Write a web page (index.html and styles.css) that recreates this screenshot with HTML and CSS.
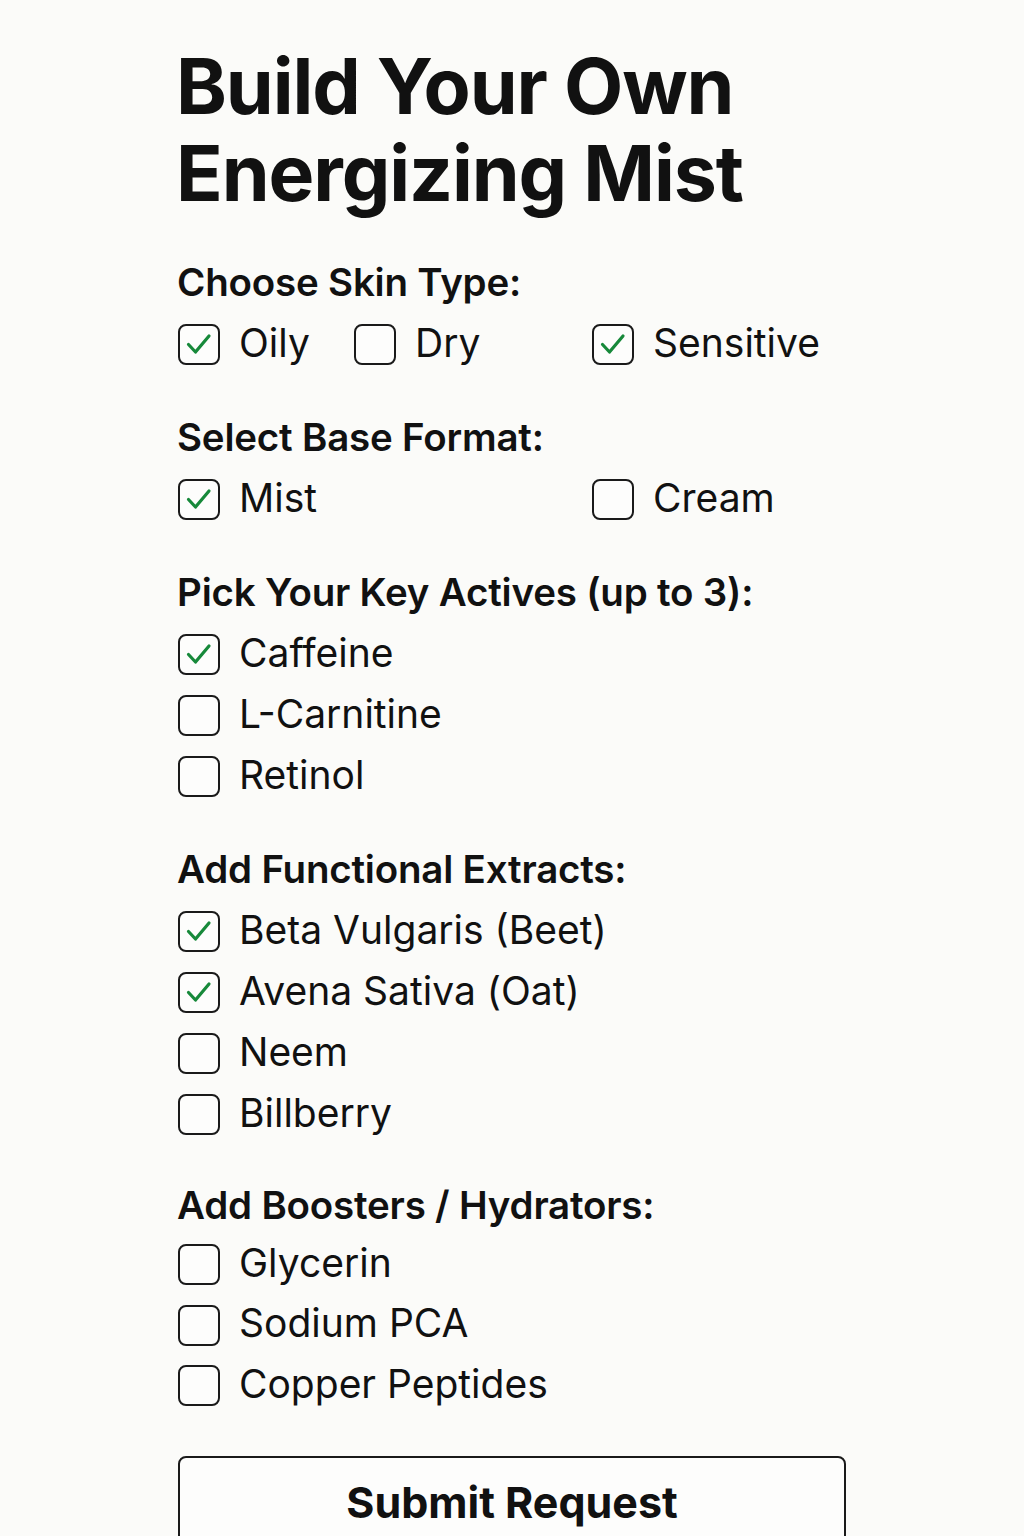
FILE: index.html
```html
<!DOCTYPE html>
<html lang="en">
<head>
<meta charset="utf-8">
<title>Build Your Own Energizing Mist</title>
<link rel="stylesheet" href="styles.css">
</head>
<body>
<main class="page">
  <h1 class="title">Build Your Own<br>Energizing Mist</h1>

  <section class="group first">
    <h2 class="group-title">Choose Skin Type:</h2>
    <div class="options grid3">
      <label class="opt"><span class="box checked"><svg viewBox="0 0 42 41"><polyline points="10.5,20.5 17.5,28 31,12"/></svg></span><span class="txt">Oily</span></label>
      <label class="opt"><span class="box"></span><span class="txt">Dry</span></label>
      <label class="opt"><span class="box checked"><svg viewBox="0 0 42 41"><polyline points="10.5,20.5 17.5,28 31,12"/></svg></span><span class="txt">Sensitive</span></label>
    </div>
  </section>

  <section class="group">
    <h2 class="group-title">Select Base Format:</h2>
    <div class="options grid3">
      <label class="opt"><span class="box checked"><svg viewBox="0 0 42 41"><polyline points="10.5,20.5 17.5,28 31,12"/></svg></span><span class="txt">Mist</span></label>
      <label class="opt col3"><span class="box"></span><span class="txt">Cream</span></label>
    </div>
  </section>

  <section class="group">
    <h2 class="group-title">Pick Your Key Actives (up to 3):</h2>
    <div class="options list">
      <label class="opt"><span class="box checked"><svg viewBox="0 0 42 41"><polyline points="10.5,20.5 17.5,28 31,12"/></svg></span><span class="txt">Caffeine</span></label>
      <label class="opt"><span class="box"></span><span class="txt">L-Carnitine</span></label>
      <label class="opt"><span class="box"></span><span class="txt">Retinol</span></label>
    </div>
  </section>

  <section class="group">
    <h2 class="group-title">Add Functional Extracts:</h2>
    <div class="options list">
      <label class="opt"><span class="box checked"><svg viewBox="0 0 42 41"><polyline points="10.5,20.5 17.5,28 31,12"/></svg></span><span class="txt">Beta Vulgaris (Beet)</span></label>
      <label class="opt"><span class="box checked"><svg viewBox="0 0 42 41"><polyline points="10.5,20.5 17.5,28 31,12"/></svg></span><span class="txt">Avena Sativa (Oat)</span></label>
      <label class="opt"><span class="box"></span><span class="txt">Neem</span></label>
      <label class="opt"><span class="box"></span><span class="txt">Billberry</span></label>
    </div>
  </section>

  <section class="group last">
    <h2 class="group-title">Add Boosters / Hydrators:</h2>
    <div class="options list">
      <label class="opt"><span class="box"></span><span class="txt">Glycerin</span></label>
      <label class="opt"><span class="box"></span><span class="txt">Sodium PCA</span></label>
      <label class="opt"><span class="box"></span><span class="txt">Copper Peptides</span></label>
    </div>
  </section>

  <button class="submit" type="button">Submit Request</button>
</main>
</body>
</html>
```

FILE: styles.css
```css
* { box-sizing: border-box; }

html, body {
  margin: 0;
  padding: 0;
  background: #fbfbf9;
}

body {
  font-family: Inter, "Noto Sans", "Liberation Sans", sans-serif;
  color: #111111;
}

.page {
  width: 668px;
  margin: 0 auto;
  padding-top: 43px;
  display: flex;
  flex-direction: column;
}

.title {
  margin: 0 0 0 -2px;
  font-size: 77px;
  line-height: 87px;
  font-weight: 700;
  letter-spacing: -1.1px;
  color: #111111;
}

.group {
  margin-top: 50px;
  display: flex;
  flex-direction: column;
}

.group.first {
  margin-top: 43px;
}

.group-title {
  margin: 0 0 20px -1px;
  font-size: 38.5px;
  line-height: 44px;
  font-weight: 600;
  letter-spacing: -0.2px;
}

.group.last {
  margin-top: 48px;
}

.group.last .group-title {
  margin-bottom: 17px;
}

.group.last .options.list {
  gap: 19.5px;
}

.options.grid3 {
  display: grid;
  grid-template-columns: 176px 238px 1fr;
}

.options.list {
  display: flex;
  flex-direction: column;
  gap: 20px;
}

.col3 {
  grid-column: 3;
}

.opt {
  display: flex;
  align-items: center;
  gap: 19px;
  height: 41px;
}

.box {
  flex: none;
  width: 42px;
  height: 41px;
  border: 2.5px solid #1a1a1a;
  border-radius: 8px;
  position: relative;
  background: #fdfdfc;
}

.box svg {
  position: absolute;
  left: -2.5px;
  top: -2.5px;
  width: 42px;
  height: 41px;
}

.box svg polyline {
  fill: none;
  stroke: #17893a;
  stroke-width: 3.2;
  stroke-linecap: round;
  stroke-linejoin: round;
}

.txt {
  font-size: 39px;
  line-height: 41px;
  font-weight: 400;
  padding-bottom: 5px;
  color: #111111;
}

.submit {
  margin-top: 49.5px;
  width: 100%;
  padding: 19px 0;
  border: 2px solid #1a1a1a;
  border-radius: 8px;
  background: #fdfdfc;
  font-family: Inter, "Noto Sans", "Liberation Sans", sans-serif;
  font-size: 43px;
  line-height: 50px;
  font-weight: 700;
  letter-spacing: 0;
  color: #111111;
}
```
